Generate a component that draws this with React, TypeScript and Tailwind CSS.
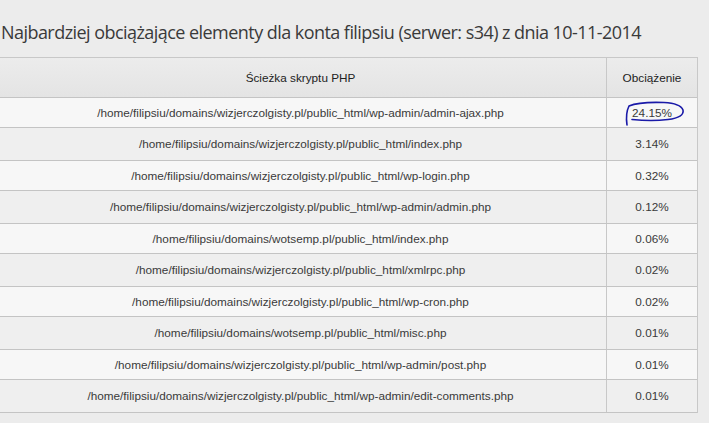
import React from "react";

const rows: [string, string][] = [
  ["/home/filipsiu/domains/wizjerczolgisty.pl/public_html/wp-admin/admin-ajax.php", "24.15%"],
  ["/home/filipsiu/domains/wizjerczolgisty.pl/public_html/index.php", "3.14%"],
  ["/home/filipsiu/domains/wizjerczolgisty.pl/public_html/wp-login.php", "0.32%"],
  ["/home/filipsiu/domains/wizjerczolgisty.pl/public_html/wp-admin/admin.php", "0.12%"],
  ["/home/filipsiu/domains/wotsemp.pl/public_html/index.php", "0.06%"],
  ["/home/filipsiu/domains/wizjerczolgisty.pl/public_html/xmlrpc.php", "0.02%"],
  ["/home/filipsiu/domains/wizjerczolgisty.pl/public_html/wp-cron.php", "0.02%"],
  ["/home/filipsiu/domains/wotsemp.pl/public_html/misc.php", "0.01%"],
  ["/home/filipsiu/domains/wizjerczolgisty.pl/public_html/wp-admin/post.php", "0.01%"],
  ["/home/filipsiu/domains/wizjerczolgisty.pl/public_html/wp-admin/edit-comments.php", "0.01%"],
];

export default function App() {
  return (
    <div className="w-[709px] h-[423px] overflow-hidden bg-[#ececec] text-[#333]" style={{ fontFamily: "'Liberation Sans', Arial, sans-serif" }}>
      <div className="h-[57px] pt-[20px] pl-[1px] text-[18px] leading-[24px] tracking-[-0.55px] text-[#3a3a3a] whitespace-nowrap" style={{ fontFamily: "'Open Sans', sans-serif" }}>
        Najbardziej obciążające elementy dla konta filipsiu (serwer: s34) z dnia 10-11-2014
      </div>
      <div className="ml-[-5px] w-[703px] border-t border-r border-[#c8c8c8] text-[11.75px]">
        <div className="flex h-[40px] bg-gradient-to-b from-[#ececec] to-[#e4e4e4] border-b border-[#c4c4c4]">
          <div className="w-[612px] flex items-center justify-center border-r border-[#c8c8c8] text-[#222]">Ścieżka skryptu PHP</div>
          <div className="flex-1 flex items-center justify-center text-[#222]">Obciążenie</div>
        </div>
        {rows.map(([path, load], i) => (
          <div
            key={i}
            className={
              "flex border-b border-[#c4c4c4] " +
              (i % 2 === 0 ? "h-[30px] bg-[#f7f7f7]" : "h-[33px] bg-[#efefef]")
            }
          >
            <div className="w-[612px] flex items-center justify-center border-r border-[#c8c8c8] text-[#3a3a3a]">{path}</div>
            <div className="flex-1 flex items-center justify-center text-[#3a3a3a] relative">
              {load}
              {i === 0 && (
                <svg className="absolute left-[17px] top-[2px]" width="62" height="28" viewBox="0 0 62 28" fill="none">
                  <path
                    d="M3 25 C2 18 3 10 5 6 C12 3 26 2 40 2.5 C50 3 57 5 59 10 C60 15 55 18 44 19.5 C32 21 18 20.5 8 19.5"
                    stroke="#1a1aa8"
                    strokeWidth="1.6"
                    strokeLinecap="round"
                  />
                </svg>
              )}
            </div>
          </div>
        ))}
      </div>
    </div>
  );
}
